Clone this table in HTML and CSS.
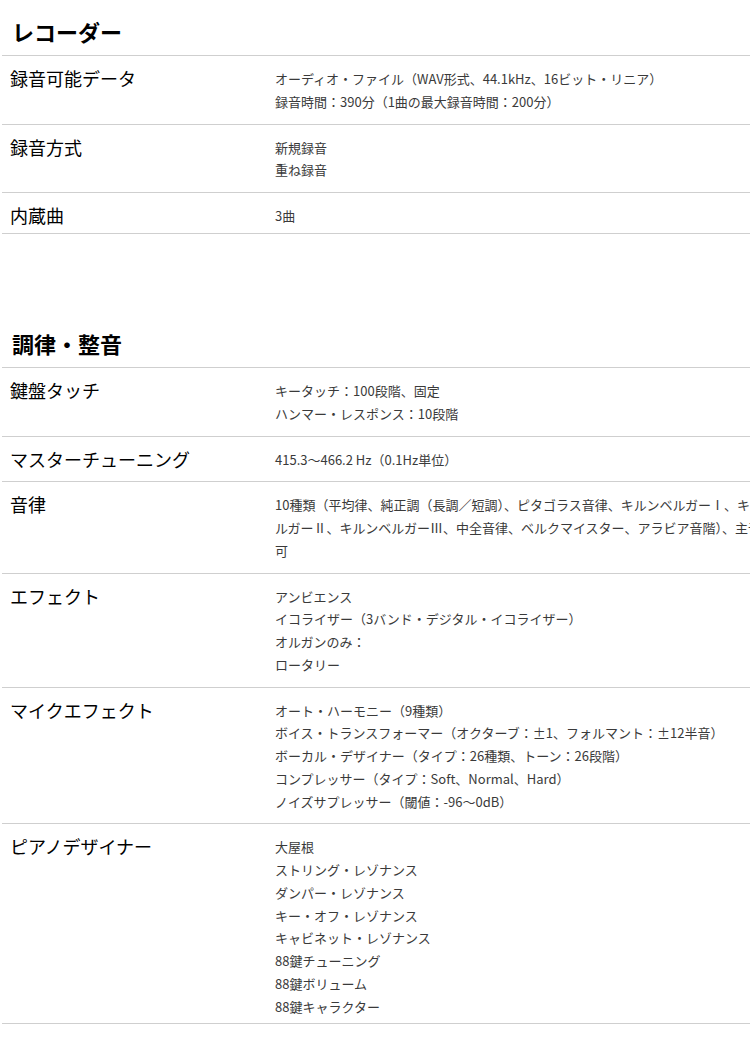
FILE: index.html
```html
<!DOCTYPE html>
<html lang="ja">
  <head>
    <meta charset="utf-8" />
    <title>仕様 - レコーダー / 調律・整音</title>
    <link rel="stylesheet" href="styles.css">
  </head>
  <body>
    <!-- レコーダー -->
    <section class="section">
      <h2 class="section-title">レコーダー</h2>
      <div class="spec">
        <div class="row">
          <div class="label">録音可能データ</div>
          <div class="value">
            オーディオ・ファイル（WAV形式、44.1kHz、16ビット・リニア）<br />
            録音時間：390分（1曲の最大録音時間：200分）
          </div>
        </div>
        <div class="row">
          <div class="label">録音方式</div>
          <div class="value">新規録音<br />重ね録音</div>
        </div>
        <div class="row">
          <div class="label">内蔵曲</div>
          <div class="value">3曲</div>
        </div>
      </div>
    </section>

    <!-- 調律・整音 -->
    <section class="section">
      <h2 class="section-title">調律・整音</h2>
      <div class="spec">
        <div class="row">
          <div class="label">鍵盤タッチ</div>
          <div class="value">
            キータッチ：100段階、固定<br />
            ハンマー・レスポンス：10段階
          </div>
        </div>
        <div class="row">
          <div class="label">マスターチューニング</div>
          <div class="value">415.3～466.2 Hz（0.1Hz単位）</div>
        </div>
        <div class="row">
          <div class="label">音律</div>
          <div class="value">
            10種類（平均律、純正調（長調／短調）、ピタゴラス音律、キルンベルガーⅠ、キルンベ<br />
            ルガーⅡ、キルンベルガーⅢ、中全音律、ベルクマイスター、アラビア音階）、主音指定<br />
            可
          </div>
        </div>
        <div class="row">
          <div class="label">エフェクト</div>
          <div class="value">
            アンビエンス<br />
            イコライザー（3バンド・デジタル・イコライザー）<br />
            オルガンのみ：<br />
            ロータリー
          </div>
        </div>
        <div class="row">
          <div class="label">マイクエフェクト</div>
          <div class="value">
            オート・ハーモニー（9種類）<br />
            ボイス・トランスフォーマー（オクターブ：±1、フォルマント：±12半音）<br />
            ボーカル・デザイナー（タイプ：26種類、トーン：26段階）<br />
            コンプレッサー（タイプ：Soft、Normal、Hard）<br />
            ノイズサプレッサー（閾値：-96～0dB）
          </div>
        </div>
        <div class="row">
          <div class="label">ピアノデザイナー</div>
          <div class="value">
            大屋根<br />
            ストリング・レゾナンス<br />
            ダンパー・レゾナンス<br />
            キー・オフ・レゾナンス<br />
            キャビネット・レゾナンス<br />
            88鍵チューニング<br />
            88鍵ボリューム<br />
            88鍵キャラクター
          </div>
        </div>
      </div>
    </section>
  </body>
</html>
```

FILE: styles.css
```css
/* 全体 */
html {
  overflow-x: hidden;
}
body {
  margin: 0;
  padding: 0;
  font-family: "Noto Sans CJK JP", "Noto Sans", sans-serif;
  color: #000;
  background-color: #fff;
}

/* 1. セクション見出し */
.section {
  margin-bottom: 78px;
}
.section-title {
  margin: 0;
  padding: 15px 12px 8px;
  font-size: 22px;
  line-height: 32px;
  font-weight: bold;
}

/* 2. 仕様の表 (左: 項目名 / 右: 内容) */
.spec {
  width: 820px;
  margin-left: 2px;
  border-top: 1px solid #cfcfcf;
}
.row {
  display: flex;
  border-bottom: 1px solid #cfcfcf;
}
.label {
  width: 265px;
  flex-shrink: 0;
  padding: 9px 0 4px 8px;
  font-size: 18px;
  line-height: 27px;
}
.value {
  flex: 1;
  padding: 12px 0 10px 0;
  font-size: 13px;
  line-height: 22.75px;
  color: #3a3a3a;
  white-space: nowrap;
}

/* 3. 表の最後の行は下の余白を少なめに */
.row:last-child .value {
  padding-bottom: 5px;
}
```
